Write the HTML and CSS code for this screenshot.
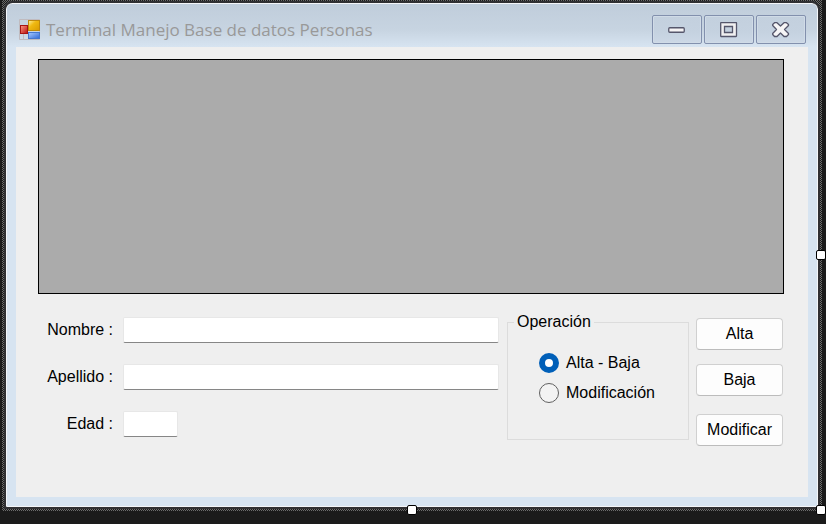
FILE: index.html
```html
<!DOCTYPE html>
<html lang="es">
<head>
<meta charset="utf-8">
<title>Terminal Manejo Base de datos Personas</title>
<link rel="stylesheet" href="styles.css">
</head>
<body>
<div class="selection">
  <main class="window">
    <header class="titlebar">
      <svg class="app-icon" viewBox="0 0 22 22" aria-hidden="true">
        <defs>
          <linearGradient id="gold" x1="0" y1="0" x2="1" y2="1"><stop offset="0" stop-color="#fff0a0"/><stop offset=".4" stop-color="#f0b911"/><stop offset="1" stop-color="#d99a00"/></linearGradient>
          <linearGradient id="red" x1="0" y1="0" x2="1" y2="1"><stop offset="0" stop-color="#ff9a85"/><stop offset="1" stop-color="#b80d0d"/></linearGradient>
          <linearGradient id="blue" x1="0" y1="0" x2="1" y2="1"><stop offset="0" stop-color="#a9caff"/><stop offset="1" stop-color="#2f68d8"/></linearGradient>
        </defs>
        <path d="M.5 .5H20.500V20.500H.5ZM4.500 14V20" fill="none" stroke="#c0bbbf"/>
        <rect x="9.500" y="1.500" width="11" height="10" fill="url(#gold)" stroke="#c08a0c"/>
        <rect x="1.500" y="6.500" width="7" height="8" fill="url(#red)" stroke="#a61414"/>
        <rect x="9.500" y="13.500" width="11" height="6" fill="url(#blue)" stroke="#4677cf"/>
      </svg>
      <h1 class="title">Terminal Manejo Base de datos Personas</h1>
      <div class="controls">
        <button class="control" type="button" aria-label="Minimizar">
          <svg class="glyph" viewBox="0 0 18 16"><rect x=".75" y="5.750" width="15.500" height="4.500" rx="1" fill="#f5f3f4" stroke="#55566b" stroke-width="1.300"/></svg>
        </button>
        <button class="control" type="button" aria-label="Maximizar">
          <svg class="glyph" viewBox="0 0 18 16"><path fill-rule="evenodd" d="M1.500 .5H16Q16.500 .5 16.500 1V14Q16.500 14.500 16 14.500H1.500Q.7 14.500 .7 14V1Q.7 .5 1.500 .5ZM4.500 4.500V10.500H12.500V4.500Z" fill="#f1f0f1" stroke="#55566b" stroke-width="1.300"/></svg>
        </button>
        <button class="control" type="button" aria-label="Cerrar">
          <svg class="glyph" viewBox="0 0 18 16"><path d="M2.500 .7H5L8.500 4L12 .7H14.500L16.500 2.500V3.500L12.500 7.500L16.500 11.500V12.500L14.500 14.500H12L8.500 11L5 14.500H2.500L.7 12.500V11.500L4.500 7.500L.7 3.500V2.500Z" fill="#f6f5f6" stroke="#55566b" stroke-width="1.300" stroke-linejoin="round"/></svg>
        </button>
      </div>
    </header>
    <div class="client">
      <div class="datagrid" role="grid" aria-label="Personas"></div>
      <form class="editor">
        <div class="fields">
          <label for="nombre">Nombre :</label>
          <input class="textbox" id="nombre" type="text">
          <label for="apellido">Apellido :</label>
          <input class="textbox" id="apellido" type="text">
          <label for="edad">Edad :</label>
          <input class="textbox age" id="edad" type="text">
        </div>
        <fieldset class="group">
          <legend>Operación</legend>
          <label class="option"><input type="radio" name="operacion" checked>Alta - Baja</label>
          <label class="option"><input type="radio" name="operacion">Modificación</label>
        </fieldset>
        <div class="actions">
          <button class="action" type="button">Alta</button>
          <button class="action" type="button">Baja</button>
          <button class="action modify" type="button">Modificar</button>
        </div>
      </form>
    </div>
  </main>
  <span class="handle handle-right"></span>
  <span class="handle handle-bottom"></span>
  <span class="handle handle-corner"></span>
</div>
</body>
</html>
```
FILE: styles.css
```css
* {
  box-sizing: border-box;
}

body {
  margin: 0;
  padding: 0 4px 13px 2px;
  min-height: 100vh;
  display: flex;
  background: #1b1b1b;
  color: #000;
  font: 16px/20px "Liberation Sans", Arial, sans-serif;
}

.selection {
  position: relative;
  flex: 1;
  display: flex;
  padding: 1px 2px 2px;
  background: repeating-conic-gradient(#6c6c6c 0 25%, #1b1b1b 0 50%) 0 0 / 2px 2px;
}

.window {
  flex: 1;
  display: flex;
  flex-direction: column;
  padding: 0 9px 9px;
  border: 1px solid #f4f6f9;
  border-radius: 6px 6px 0 0;
  outline: 2px solid #303033;
  margin: 2px;
  background: linear-gradient(#c0cddb, #c7d4e1 26px, #d7e4f1 43px);
}

.titlebar {
  display: flex;
  align-items: center;
  height: 43px;
  padding: 8px 2px 0 3px;
}

.app-icon {
  width: 22px;
  height: 22px;
}

.title {
  flex: 1;
  margin: 0 0 0 5px;
  color: #999;
  font: 400 17px/24px "Open Sans", "Noto Sans", sans-serif;
}

.controls {
  display: flex;
  gap: 2px;
}

.control {
  display: flex;
  align-items: center;
  justify-content: center;
  width: 50px;
  height: 29px;
  padding: 0;
  border: 1px solid #8290ad;
  border-radius: 2px;
  background: linear-gradient(#c3d0de, #c5d2e0 60%, #ccd8e6);
  box-shadow: inset 0 0 0 1px #d0dbe7;
}

.glyph {
  width: 18px;
  height: 16px;
}

.client {
  flex: 1;
  padding: 12px 24px 16px 22px;
  background: #efefef;
}

.datagrid {
  height: 235px;
  border: 1px solid #000;
  background: #ababab;
}

.editor {
  display: grid;
  grid-template-columns: 1fr 182px 87px;
  column-gap: 7px;
  align-items: start;
  padding: 23px 1px 0 0;
}

.fields {
  display: grid;
  grid-template-columns: 75px 1fr;
  gap: 21px 10px;
  align-items: center;
  padding-right: 1px;
  text-align: right;
}

.textbox {
  width: 100%;
  height: 26px;
  padding: 2px 4px;
  border: 1px solid #e7e7e7;
  border-bottom-color: #868686;
  border-radius: 2px;
  background: #fff;
  font: inherit;
}

.age {
  width: 55px;
}

.group {
  min-width: 0;
  height: 128px;
  margin: -5px 0 0;
  padding: 16px 0 0 31px;
  border: 1px solid #dcdcdc;
}

.group legend {
  margin-left: -25px;
  padding: 0 3px;
}

.option {
  display: flex;
  align-items: center;
  gap: 7px;
  height: 30px;
}

.option input {
  appearance: none;
  width: 20px;
  height: 20px;
  margin: 0;
  border: 1px solid #606060;
  border-radius: 50%;
  background: #f3f3f3;
}

.option input:checked {
  border: 6px solid #005fb8;
  background: #fff;
}

.actions {
  display: grid;
  gap: 14px;
  padding-top: 1px;
}

.action {
  height: 32px;
  padding: 0;
  border: 1px solid #d0d0d0;
  border-bottom-color: #bcbcbc;
  border-radius: 4px;
  background: #fdfdfd;
  color: #000;
  font: inherit;
}

.modify {
  margin-top: 4px;
}

.handle {
  position: absolute;
  width: 10px;
  height: 10px;
  border: 1px solid #000;
  border-radius: 2px;
  background: #fff;
}

.handle-right {
  top: 50%;
  right: -4px;
  margin-top: -6px;
}

.handle-bottom {
  bottom: -4px;
  left: 50%;
  margin-left: -5px;
}

.handle-corner {
  right: -4px;
  bottom: -4px;
}
```
